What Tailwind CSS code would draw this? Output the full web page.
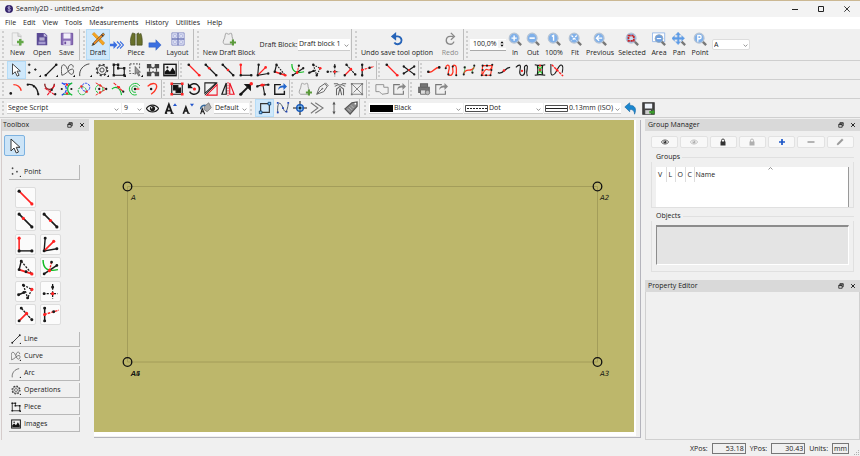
<!DOCTYPE html>
<html lang="en">
<head>
<meta charset="utf-8">
<title>Seamly2D</title>
<script src="https://cdn.jsdelivr.net/npm/@tailwindcss/browser@4"></script>
</head>
<body class="bg-[#f0f0f0] font-['Open_Sans','Noto_Sans',sans-serif] text-[7px] leading-[10px] text-[#1a1a1a]">

<svg class="hidden" aria-hidden="true">
  <defs>
    <g id="corner"><path d="M13.500 16l2.500-2.500V16z" fill="#111" stroke="none"/></g>
  </defs>
  <symbol id="cursor" viewBox="0 0 16 16"><path d="M4 1v12l3-3 2.300 5 2.200-1-2.300-4.700H13z" fill="#fff" stroke="#333" stroke-width="1"/></symbol>
  <symbol id="points" viewBox="0 0 16 16"><path d="M1 2h3M2.500 .5v3M1 11h3M2.500 9.500v3M8 7.500h3M9.500 6v3" stroke-width="1"/><use href="#corner"/></symbol>
  <symbol id="line" viewBox="0 0 16 16"><path d="M2 14L14 2"/><path d="M2 14h0M14 2h0" stroke-width="3" stroke-linecap="round"/><use href="#corner"/></symbol>
  <symbol id="curve" viewBox="0 0 16 16"><path d="M1 14C0 8 0 2 3 2c4 0 5 11 9 11 3 0 3-6 1-6-4 0-7 6-12 7M8 7c0-6 6-7 6-2" stroke="#444" stroke-width="1"/><use href="#corner"/></symbol>
  <symbol id="arc" viewBox="0 0 16 16"><path d="M2 15C1 8 6 2 13 1" stroke="#444" stroke-width="1.100"/><use href="#corner"/></symbol>
  <symbol id="gear" viewBox="0 0 16 16"><circle cx="8" cy="8" r="6.300" stroke="#333" stroke-width="1.800" stroke-dasharray="2.400 2.550"/><circle cx="8" cy="8" r="5.200" stroke="#333" stroke-width=".9"/><circle cx="8" cy="8" r="2.400" stroke="#333" stroke-width="1"/><use href="#corner"/></symbol>
  <symbol id="piece" viewBox="0 0 16 16"><path d="M2 2h5v4h7v8H2z"/><path d="M.7 2h2.600M5.700 2h2.600M5.700 6h2.600M12.700 6h2.600M.7 14h2.600M12.700 14h2.600" stroke-width="2.600"/><use href="#corner"/></symbol>
  <symbol id="piecesel" viewBox="0 0 16 16"><path d="M1 1h11v5M1 1v11h5" stroke="#666" stroke-dasharray="2 1.500"/><path d="M7 4v9l2-2 2 4 1.500-1-2-3.500H13z" fill="#999" stroke="#555" stroke-width=".8"/><use href="#corner"/></symbol>
  <symbol id="union" viewBox="0 0 16 16"><path d="M2 2h3v3H2zM11 2h3v3h-3zM2 11h3v3H2zM11 11h3v3h-3z" fill="#555" stroke="#444" stroke-width="2"/><path d="M5 4l3 2 3-2M5 12l3-2 3 2M4 6v4M12 6v4" stroke="#555"/></symbol>
  <symbol id="image" viewBox="0 0 16 16"><rect x="1" y="1.500" width="14" height="13" stroke-width="1.600"/><path d="M2 13V10l3-3 3 3 3-5 3 5v3z" fill="#111" stroke="none"/><circle cx="5" cy="5" r="1.200" fill="#111" stroke="none"/></symbol>

  <symbol id="p1" viewBox="0 0 16 16"><path d="M2 2l12 12" stroke="#f22" stroke-width="1.500"/><path d="M2 2h0" stroke-width="3" stroke-linecap="round"/><path d="M14 14h0" stroke="#f22" stroke-width="3" stroke-linecap="round"/></symbol>
  <symbol id="p2" viewBox="0 0 16 16"><path d="M2 2l12 12" stroke-width="1.500"/><path d="M2 2h0M14 14h0" stroke-width="3" stroke-linecap="round"/><path d="M6 6h0" stroke="#f22" stroke-width="3" stroke-linecap="round"/></symbol>
  <symbol id="p3" viewBox="0 0 16 16"><path d="M2 2l12 12" stroke-width="1.500"/><path d="M2 2h0M14 14h0" stroke-width="3" stroke-linecap="round"/><path d="M8 8h0" stroke="#f22" stroke-width="3" stroke-linecap="round"/></symbol>
  <symbol id="p4" viewBox="0 0 16 16"><path d="M2 14V2" stroke="#f22" stroke-width="1.500"/><path d="M2 14h12" stroke-width="1.300"/><path d="M2 14h0M14 14h0" stroke-width="3" stroke-linecap="round"/><path d="M2 2h0" stroke="#f22" stroke-width="3" stroke-linecap="round"/></symbol>
  <symbol id="p5" viewBox="0 0 16 16"><path d="M3 2L2 14l12-2" stroke-width="1.300"/><path d="M2 14l9-9" stroke="#f22" stroke-width="1.500"/><path d="M3 2h0M2 14h0M14 12h0" stroke-width="2.800" stroke-linecap="round"/><path d="M11 5h0" stroke="#f22" stroke-width="3" stroke-linecap="round"/></symbol>
  <symbol id="p6" viewBox="0 0 16 16"><path d="M4 2L2 10" stroke-width="1.300"/><path d="M4 2l10 12" stroke-width="1.200" stroke-dasharray="2 1.200"/><path d="M2 10l12 4" stroke="#f22" stroke-width="1.600"/><path d="M4 2h0M2 10h0M8.500 12h0" stroke-width="2.800" stroke-linecap="round"/><path d="M14 14h0" stroke="#f22" stroke-width="3" stroke-linecap="round"/></symbol>
  <symbol id="p7" viewBox="0 0 16 16"><path d="M1 1c0 9 5 11 14 9" stroke="#1b2" stroke-width="1.400"/><path d="M2 14l12-8" stroke-width="1.400"/><path d="M9 3L7 11" stroke="#f22" stroke-dasharray="2 1"/><path d="M2 14h0M14 6h0M9 3h0" stroke-width="2.600" stroke-linecap="round"/><path d="M7 11h0" stroke="#f22" stroke-width="3" stroke-linecap="round"/></symbol>
  <symbol id="p8" viewBox="0 0 16 16"><path d="M6 2l8 4-4 8M6 2l4 12" stroke-width="1.200" stroke-dasharray="1.800 1.200"/><path d="M1.500 11l5-2" stroke-width="1.400"/><path d="M6 2h0M1.500 11h0M10 14h0M6.500 9h0" stroke-width="2.800" stroke-linecap="round"/><path d="M14 6h0" stroke="#f22" stroke-width="3" stroke-linecap="round"/></symbol>
  <symbol id="p9" viewBox="0 0 16 16"><path d="M10 1v14M1 10h14" stroke-width="1.200" stroke-dasharray="2 1.400"/><path d="M10 4h0M2 10h0" stroke-width="2.800" stroke-linecap="round"/><path d="M10 10h0" stroke="#f22" stroke-width="3" stroke-linecap="round"/></symbol>
  <symbol id="p10" viewBox="0 0 16 16"><path d="M4 2l10 11" stroke-width="1.200" stroke-dasharray="2.500 .8"/><path d="M2 14l7-7" stroke="#f22" stroke-width="1.600"/><path d="M4 2h0M14 13h0M2 14h0" stroke-width="2.800" stroke-linecap="round"/><path d="M9 7h0" stroke="#f22" stroke-width="3" stroke-linecap="round"/></symbol>
  <symbol id="p11" viewBox="0 0 16 16"><path d="M2.500 1v14" stroke-width="1.400"/><path d="M2 8l14-4" stroke="#f22" stroke-width="1.300" stroke-dasharray="2.500 1"/><path d="M2.500 2h0M2.500 14h0M11 5.500h0" stroke-width="2.800" stroke-linecap="round"/><path d="M2.500 8h0" stroke="#f22" stroke-width="3" stroke-linecap="round"/></symbol>
  <symbol id="cross" viewBox="0 0 16 16"><path d="M2 12L14 4M2 4l12 9" stroke-width="1.400"/><path d="M2 12h0M14 4h0M2 4h0M14 13h0" stroke-width="2.600" stroke-linecap="round"/><path d="M8 8h0" stroke="#f22" stroke-width="2.200" stroke-linecap="round"/></symbol>
  <symbol id="c1" viewBox="0 0 16 16"><path d="M1 10c6 3 7-6 14-5" stroke="#f32" stroke-width="1.600"/><path d="M1.500 10h0M14 5h0" stroke-width="3" stroke-linecap="round"/></symbol>
  <symbol id="c2" viewBox="0 0 16 16"><path d="M2 6c0-4 4-5 4-1 0 4-3 8 0 9s5-3 4-7 1-5 3-4 1 6 1 11" stroke="#f32" stroke-width="1.500"/><path d="M2 6h0M5 13h0M10 4h0M14 14h0" stroke-width="2.400" stroke-linecap="round"/></symbol>
  <symbol id="c3" viewBox="0 0 16 16"><path d="M2 12c3-8 8 0 12-7" stroke="#f32" stroke-width="1.500"/><path d="M2 12L4 4M14 4l-3 7" stroke="#3a3" stroke-width=".8"/><path d="M2 13h0M3 5h0M14 3h0M12 11h0" stroke-width="2.400" stroke-linecap="round"/></symbol>
  <symbol id="c4" viewBox="0 0 16 16"><path d="M3 3h11L12 14H2zM3 13C8 0 10 15 14 3" stroke="#f32" stroke-width="1.300"/><path d="M3 3h0M14 2h0M12 14h0M2 14h0M8 3h0M7 14h0M3 8h0M13 8h0" stroke-width="2.400" stroke-linecap="round"/></symbol>
  <symbol id="c5" viewBox="0 0 16 16"><path d="M1 11c6 3 8-6 14-6" stroke-width="1.400"/><path d="M8 8.500h0" stroke="#f22" stroke-width="3" stroke-linecap="round"/></symbol>
  <symbol id="c6" viewBox="0 0 16 16"><path d="M1 5c3-3 6-4 5 1s-1 9 3 8 1-8 2-10 4-2 3 2-1 6 0 9" stroke-width="1.300"/><path d="M8 9h0" stroke="#f22" stroke-width="2.600" stroke-linecap="round"/></symbol>
  <symbol id="c7" viewBox="0 0 16 16"><path d="M2 2c4 1 8 1 12 0M2 14c4-1 8-1 12 0M5 3c1 5 1 6 0 10M11 3c-1 5-1 6 0 10" stroke-width="1.300"/><path d="M6 4l4 8M10 4l-4 8" stroke="#2b2" stroke-width="1.400"/><path d="M8 3h0M8 8h0" stroke="#f22" stroke-width="2.400" stroke-linecap="round"/></symbol>
  <symbol id="c8" viewBox="0 0 16 16"><path d="M1 1v9c0 6 4 4 6 0s5-10 7-7 0 5 0 8" stroke-width="1.200"/><path d="M2 2l13 13" stroke="#f22" stroke-width="1.600" stroke-dasharray="3 1"/><path d="M8 8h0" stroke="#f22" stroke-width="3" stroke-linecap="round"/></symbol>

  <symbol id="a1" viewBox="0 0 16 16"><path d="M5 3c5 0 8 3 9 7" stroke="#f32" stroke-width="1.600"/><path d="M2 13h0" stroke-width="3" stroke-linecap="round"/></symbol>
  <symbol id="a2" viewBox="0 0 16 16"><path d="M2 3c6-1 11 3 12 11" stroke-width="1.400"/><path d="M2 3h0M9 5h0M14 14h0" stroke-width="2.600" stroke-linecap="round"/></symbol>
  <symbol id="a3" viewBox="0 0 16 16"><path d="M2 2c0 8 10 9 11 0" stroke="#822" stroke-width="1.600"/><path d="M2 7l12 8M5 15L14 3" stroke="#e12" stroke-width="1.200" stroke-dasharray="4 1"/><path d="M10 9h0M14 14h0" stroke-width="2.600" stroke-linecap="round"/></symbol>
  <symbol id="a4" viewBox="0 0 16 16"><path d="M2 1c7 3 7 11 0 14M4 2h9" stroke="#24e" stroke-width="1.400" stroke-dasharray="4 1"/><path d="M14 1c-7 3-7 11 0 14M4 14h9" stroke="#1b3" stroke-width="1.400"/><path d="M2 8h0M13 8h0" stroke-width="2.500" stroke-linecap="round"/><path d="M8 3h0M8 13h0" stroke="#f22" stroke-width="2.800" stroke-linecap="round"/></symbol>
  <symbol id="a5" viewBox="0 0 16 16"><circle cx="10" cy="6" r="4.600" stroke="#24e" stroke-width="1.100" stroke-dasharray="3 1"/><circle cx="6" cy="10" r="4.600" stroke="#1b3" stroke-width="1.100" stroke-dasharray="3 1"/><path d="M5 5h0M11 11h0" stroke="#f22" stroke-width="2.800" stroke-linecap="round"/></symbol>
  <symbol id="a6" viewBox="0 0 16 16"><circle cx="6" cy="8" r="4.300" stroke="#1b3" stroke-width="1.100" stroke-dasharray="3 1"/><path d="M2 1l12 7-12 7" stroke="#e22" stroke-width="1.100" stroke-dasharray="4 1"/><path d="M6 8h0M14 8h0" stroke-width="2.600" stroke-linecap="round"/><path d="M7 4h0M7 12h0" stroke="#f22" stroke-width="2.600" stroke-linecap="round"/></symbol>
  <symbol id="a7" viewBox="0 0 16 16"><path d="M1 8c5-4 10-1 11 7" stroke="#1b3" stroke-width="1.300"/><path d="M3 1l11 10" stroke="#e22" stroke-width="1.200" stroke-dasharray="4 1"/><path d="M9 6h0" stroke="#f22" stroke-width="2.800" stroke-linecap="round"/><path d="M14 11h0" stroke-width="2.600" stroke-linecap="round"/></symbol>
  <symbol id="a8" viewBox="0 0 16 16"><path d="M13.500 4.500a6.500 6.500 0 1 0-3.500 10M11.500 6.500a3.800 3.800 0 1 0-2.500 5.300" stroke="#1b3" stroke-width="1.100"/><path d="M8 8h5" stroke="#f22"/><path d="M8 8h0" stroke-width="2.800" stroke-linecap="round"/></symbol>
  <symbol id="a9" viewBox="0 0 16 16"><path d="M3 5c5-5 12-4 10 2-1 3-3 5-6 7" stroke="#f32" stroke-width="1.600"/><path d="M7 8h0" stroke-width="2.800" stroke-linecap="round"/></symbol>

  <symbol id="group" viewBox="0 0 16 16"><path d="M2 2h12v12H2z"/><path d="M4 4h5v5H4zM7 7h5v5H7z" fill="#111"/><path d="M.5 2h3M12.500 2h3M.5 14h3M12.500 14h3" stroke="#f22" stroke-width="3"/></symbol>
  <symbol id="rotate" viewBox="0 0 16 16"><path d="M3 5a6 6 0 1 1 0 6" stroke-width="1.700"/><path d="M1 1v6h6z" fill="#111" stroke="none"/><circle cx="8.500" cy="8" r="1.800" fill="#f22" stroke="none"/></symbol>
  <symbol id="mirror" viewBox="0 0 16 16"><path d="M1 13V1h13z" stroke-width="1.200"/><path d="M15 3v12H3z" stroke="#e12" stroke-width="1.200"/><path d="M1 15L15 1" stroke-width="1"/></symbol>
  <symbol id="flip" viewBox="0 0 16 16"><path d="M6 1v13H1z" stroke-width="1.400"/><path d="M10 1v13h5z" stroke="#e12"/><path d="M8 0v16" stroke="#e12" stroke-width="1" stroke-dasharray="2 1"/></symbol>
  <symbol id="move" viewBox="0 0 16 16"><path d="M2 14l9-9" stroke-width="2.200"/><path d="M7 3h6v6z" fill="#111"/><circle cx="14" cy="2" r="2" fill="#f22" stroke="none"/><circle cx="2" cy="14" r="1.800" fill="#111" stroke="none"/></symbol>
  <symbol id="truedarts" viewBox="0 0 16 16"><path d="M1 5c5-2 9-2 14-2M8 4l2 11"/><path d="M5 4l5-1" stroke="#f22" stroke-width="2"/><path d="M1.500 5h0M14 3h0M10 14h0" stroke-width="2.800" stroke-linecap="round"/><path d="M7 3.500h0" stroke="#f22" stroke-width="3.500" stroke-linecap="round"/></symbol>
  <symbol id="export" viewBox="0 0 16 16"><path d="M9 3H2v11h11v-4" stroke-width="1.600"/><path d="M6 9c0-4 3-5 6-5V1l4 4-4 4V6.500C9 6 8 7 6 9z" fill="#26c" stroke="none"/></symbol>
  <symbol id="exportg" viewBox="0 0 16 16"><path d="M9 3H2v11h11v-4" stroke="#777" stroke-width="1.300"/><path d="M6 9c0-4 3-5 6-5V1l4 4-4 4V6.500C9 6 8 7 6 9z" fill="#888" stroke="none"/></symbol>
  <symbol id="newpiece" viewBox="0 0 16 16"><path d="M5 1c1 2 4 2 5 0 2 1 1 4 2 6s1 6 0 7H3c-2-1-2-3-1-5 2-3 1-7 3-8z" fill="#eee" stroke="#999" stroke-width="1"/><path d="M9 12h7M12.500 8.500v7" stroke="#5a9a3a" stroke-width="2.400"/></symbol>
  <symbol id="pen" viewBox="0 0 16 16"><path d="M2 14L5 6l6-4 3 3-4 6zM2 14l6-6M11 2l1-1 3 3-1 1" stroke="#666" stroke-width="1.100"/><circle cx="8.500" cy="7.500" r="1" fill="#777" stroke="none"/></symbol>
  <symbol id="internal" viewBox="0 0 16 16"><path d="M1 2h4c1 2 5 2 6 0h4M2 5l4-2M14 5l-4-2M4 15V8l4-3 4 3v7M6 15l2-8 2 8" stroke="#666" stroke-width="1.200"/></symbol>
  <symbol id="insert" viewBox="0 0 16 16"><path d="M2 2h12v12H2zM2 2l12 12M14 2L4 12" stroke="#777" stroke-width="1"/><path d="M1 2h2M13 2h2M1 14h2M13 14h2" stroke="#777" stroke-width="2"/></symbol>
  <symbol id="workpiece" viewBox="0 0 16 16"><path d="M1 3h9v3h5v7l-7 1-3-3H1z" stroke="#888" stroke-width="1"/></symbol>
  <symbol id="print" viewBox="0 0 16 16"><path d="M4 6V2h8v4M2 6h12v6H2z" fill="#777" stroke="#666"/><path d="M4 9h6v5H4z" fill="#ddd" stroke="#666" stroke-width="1"/><circle cx="12" cy="12" r="2.500" fill="#bbb" stroke="#777" stroke-width="1"/></symbol>

  <symbol id="eye" viewBox="0 0 16 16"><path d="M.5 8c3.500-5.500 11.500-5.500 15 0-3.500 5.500-11.500 5.500-15 0z" stroke="currentColor" stroke-width="1.400"/><circle cx="8" cy="8" r="3.200" fill="currentColor" stroke="none"/><circle cx="7" cy="7" r=".9" fill="#fff" stroke="none"/></symbol>
  <symbol id="bigA" viewBox="0 0 16 16"><path d="M2 14L6 3l4 11M3.500 10.500h5" stroke-width="2.200"/><path d="M1 14h3M8 14h4" stroke-width="1.200"/><path d="M11 5l2.500-3.500L16 5z" fill="#25c" stroke="none"/></symbol>
  <symbol id="smallA" viewBox="0 0 16 16"><path d="M3 14l3-8 3 8M4 11h4" stroke-width="1.800"/><path d="M2 14h2M8 14h3" stroke-width="1"/><path d="M11 2l2.500 3.500L16 2z" fill="#25c" stroke="none"/></symbol>
  <symbol id="fill" viewBox="0 0 16 16"><path d="M2 15l2-7 3 7M3 12h3" stroke-width="1.300"/><path d="M7 5l5-4 3 6-5 5-4-3z" fill="#aaa" stroke="#777" stroke-width="1"/><path d="M2 9c0-4 3-5 6-5" stroke="#369" stroke-width="1.800"/></symbol>
  <symbol id="rectnodes" viewBox="0 0 16 16"><path d="M3 3h10v10H3z" stroke="#333"/><path d="M11.500 1.500h3v3h-3zM1.500 11.500h3v3h-3z" fill="#8cf" stroke="#147" stroke-width="1"/></symbol>
  <symbol id="curvenodes" viewBox="0 0 16 16"><path d="M2 14C1 0 5 0 8 8s5 3 6-5" stroke="#456" stroke-width="1.100"/><path d="M2 13h0M2 2h0M8 8h0M14 2h0M12 12h0" stroke="#24b" stroke-width="2" stroke-linecap="square"/></symbol>
  <symbol id="target" viewBox="0 0 16 16"><path d="M8 0v16M0 8h16" stroke-width="1.200"/><circle cx="8" cy="8" r="3.800" fill="#39e" fill-opacity=".5" stroke="#15b" stroke-width="1.500"/><circle cx="8" cy="8" r="1.200" fill="#111" stroke="none"/></symbol>
  <symbol id="chevs" viewBox="0 0 16 16"><path d="M1 2l8 6-8 6M6 2l9 6-9 6" stroke="#777" stroke-width="1.200"/></symbol>
  <symbol id="updown" viewBox="0 0 16 16"><path d="M8 2v12" stroke="#555" stroke-width="1"/><path d="M6.200 4L8 .5 9.800 4zM6.200 12L8 15.500 9.800 12z" fill="#555" stroke="none"/></symbol>
  <symbol id="tag" viewBox="0 0 16 16"><path d="M1 9l8-7 6-1v5l-8 9z" fill="#888" stroke="#555"/><path d="M4 9l3 3M6 7l3 3M8 5l3 3" stroke="#ccc" stroke-width=".8"/><circle cx="13" cy="3" r="1" fill="#fff" stroke="none"/></symbol>
  <symbol id="undoarrow" viewBox="0 0 16 16"><path d="M1 6l6-5v3c6 0 9 4 6 11 0-4-2-6-6-6v3z" fill="#1b87cf" stroke="#176aa8" stroke-width=".8"/></symbol>
  <symbol id="disk" viewBox="0 0 16 16"><path d="M1 1h14v14H1z" fill="#444" stroke="#333"/><path d="M3.500 2h9v6h-9z" fill="#eef3fa" stroke="none"/><path d="M4 10h7v5H4z" fill="#ccc" stroke="none"/><path d="M9 11h4V8.500l3 4-3 3.500v-2H9z" fill="#3a9a2a" stroke="none"/></symbol>

  <symbol id="new" viewBox="0 0 16 16"><path d="M2.500 1h7l3 3v11h-10z" fill="#f0f0f0" stroke="#c4c4c4" stroke-width=".8"/><path d="M9 1v4h4" stroke="#b8b8b8" stroke-width=".8" fill="#ddd"/><path d="M8 11.500h7.500M11.700 8v7.500" stroke="#63a848" stroke-width="2.800"/></symbol>
  <symbol id="open" viewBox="0 0 16 16"><path d="M2 1h9l3 3v11H2z" fill="#5a4a94" stroke="none"/><path d="M10 1v4h4z" fill="#c9c2e4" stroke="none"/><path d="M5 7h6M5 9h6" stroke="#fff" stroke-width="1"/><path d="M4 11h8v3H4z" fill="#a59bd0" stroke="none"/></symbol>
  <symbol id="save" viewBox="0 0 16 16"><path d="M1.500 1.500h13v13h-13z" fill="#8a6fb8" stroke="#6a4a9c" stroke-width="1"/><path d="M4 1.500h8v6H4z" fill="#f2eefa" stroke="none"/><path d="M4 10h8v5H4z" fill="#dfd8ee" stroke="none"/><path d="M5 11h2v3H5z" fill="#6a4a9c" stroke="none"/></symbol>
  <symbol id="draft" viewBox="0 0 16 16"><path d="M1.500 2.500l2-2 12 12-2 2.500z" fill="#f5a623" stroke="#d98200" stroke-width=".7"/><path d="M14 1L3 12l-2 3.500L4.500 14l11-11z" fill="#f08a24" stroke="#553" stroke-width=".8"/><path d="M12 3l2 2M2 13l1.500 1.500" stroke="#334" stroke-width="1.500"/></symbol>
  <symbol id="arrow2" viewBox="0 0 16 16"><path d="M0 6.500h4V3.500L8.500 8 4 12.500V9.500H0z" fill="#3b6fe0" stroke="none"/><path d="M8 4l4 4-4 4M11.500 4l4 4-4 4" stroke="#3b6fe0" stroke-width="1.300"/></symbol>
  <symbol id="arrow" viewBox="0 0 16 16"><path d="M1 5.500h8V2l6 6-6 6v-3.500H1z" fill="#3b6fe0" stroke="#2a55b8" stroke-width=".5"/></symbol>
  <symbol id="pieces" viewBox="0 0 16 16"><path d="M2 15c-1-6 0-10 2-14l3 1v13zM9 15V2l2-1 1 2 1.500-1.500C15 5 15.500 10 15 15z" fill="#68702a" stroke="#3f451a" stroke-width=".7"/></symbol>
  <symbol id="layout" viewBox="0 0 16 16"><path d="M1 1h14v14H1z" fill="#eef0fb" stroke="#8088c4" stroke-width="1"/><path d="M1 8h14M8 1v14" stroke="#6f78b8" stroke-width="1.500"/><path d="M3 3h3v3H3zM10 3h3v3h-3zM3 10h3v3H3zM10 10h3v3h-3z" stroke="#9aa1d6" stroke-width=".8"/></symbol>
  <symbol id="undo" viewBox="0 0 16 16"><path d="M3 5h6a4.500 4.500 0 1 1-4 7" stroke="#2563b8" stroke-width="2.200"/><path d="M7 0v10L1 5z" fill="#2563b8" stroke="none"/></symbol>
  <symbol id="redo" viewBox="0 0 16 16"><path d="M12 5H8a4.500 4.500 0 1 0 4.500 6" stroke="#888" stroke-width="1.600"/><path d="M9 1l4 4-4 4" stroke="#888" stroke-width="1.600"/></symbol>
  <symbol id="lens" viewBox="0 0 16 16"><path d="M11 11l4 4" stroke="#777" stroke-width="2.600"/><circle cx="7" cy="7" r="5.600" fill="#7fb0ea" stroke="#b5c3d4" stroke-width="1.400"/></symbol>
  <symbol id="zin" viewBox="0 0 16 16"><use href="#lens"/><path d="M4 7h6M7 4v6" stroke="#fff" stroke-width="1.600"/></symbol>
  <symbol id="zout" viewBox="0 0 16 16"><use href="#lens"/><path d="M4 7h6" stroke="#fff" stroke-width="1.800"/></symbol>
  <symbol id="z100" viewBox="0 0 16 16"><use href="#lens"/><path d="M5.500 5L7.500 4v6" stroke="#fff" stroke-width="1.600"/></symbol>
  <symbol id="zfit" viewBox="0 0 16 16"><use href="#lens"/><path d="M4 4l6 6M10 4l-6 6" stroke="#fff" stroke-width="1.500" stroke-dasharray="2.500 1.500"/></symbol>
  <symbol id="zprev" viewBox="0 0 16 16"><use href="#lens"/><path d="M10.500 7H5M7 4L4 7l3 3" stroke="#fff" stroke-width="1.600"/></symbol>
  <symbol id="zsel" viewBox="0 0 16 16"><use href="#lens"/><path d="M4 4h6v6H4z" fill="#cde" stroke="#c22" stroke-width="2" stroke-dasharray="2.500 .8"/></symbol>
  <symbol id="zarea" viewBox="0 0 16 16"><path d="M.5 1h14v10H.5z" fill="#fff" stroke="#8fb4e8" stroke-width="1"/><path d="M11 11l4 4" stroke="#777" stroke-width="2.600"/><circle cx="8" cy="7.500" r="4.500" fill="#6c9fe0" stroke="#9ab" stroke-width="1"/><path d="M5.500 7.500h5" stroke="#fff" stroke-width="1.300"/></symbol>
  <symbol id="zpan" viewBox="0 0 16 16"><path d="M11 11l4 4" stroke="#777" stroke-width="2.600"/><path d="M7 0l3 3.500H8.200V6H11V4l3.500 3.200L11 10.500V8.500H8.200V11H10l-3 3.500L4 11h2V8.500H3v2L-.5 7.200 3 4v2h3V3.500H4z" fill="#5b9be8" stroke="#8fb4e0" stroke-width=".6"/></symbol>
  <symbol id="zpoint" viewBox="0 0 16 16"><use href="#lens"/><path d="M5.500 11V4h2a1.800 1.800 0 0 1 0 3.700h-2" stroke="#fff" stroke-width="1.500"/></symbol>
  <symbol id="lock" viewBox="0 0 16 16"><path d="M3 7h10v8H3z" fill="currentColor" stroke="none"/><path d="M5 8V5a3 3 0 0 1 6 0v3" stroke="currentColor" stroke-width="1.800"/></symbol>
  <symbol id="plus" viewBox="0 0 16 16"><path d="M2 8h12M8 2v12" stroke="#1d57c8" stroke-width="3.400"/></symbol>
  <symbol id="minus" viewBox="0 0 16 16"><path d="M1 8h14" stroke="#888" stroke-width="2.400"/></symbol>
  <symbol id="pencil" viewBox="0 0 16 16"><path d="M2 14l1-3.500L12 1.500l2.500 2.500-9 9z" fill="#999" stroke="#888" stroke-width=".6"/></symbol>
  <symbol id="float" viewBox="0 0 16 16"><path d="M5 5V2h9v8h-3M2 6h9v8H2zM2 7h9M5 3h9" stroke-width="2"/></symbol>
  <symbol id="close" viewBox="0 0 16 16"><path d="M3 3l10 10M13 3L3 13" stroke-width="2.500"/></symbol>
  <symbol id="down" viewBox="0 0 16 16"><path d="M2 5l6 6 6-6" stroke="#555" stroke-width="2"/></symbol>
</svg>

<div class="flex min-h-screen flex-col border-t border-[#cbb893]">
  <header>
    <div class="flex h-4 items-center bg-[#f3f3f3] pl-[5px] pr-0">
      <svg class="mr-[3px] size-2" viewBox="0 0 16 16" fill="none"><circle cx="8" cy="8" r="8" fill="#33236b"/><path d="M11 5c-2-2-6-1-5 1s5 1 5 4-5 2-6 0M8 1v14" stroke="#d5cef0" stroke-width="1.300"/></svg>
      <h1 class="flex-1">Seamly2D - untitled.sm2d*</h1>
      <button aria-label="Minimize" class="flex w-[26px] justify-center"><svg class="size-[6px]" viewBox="0 0 6 6"><path d="M0 3.500h6" stroke="#222"/></svg></button>
      <button aria-label="Maximize" class="flex w-[26px] justify-center"><svg class="size-[6px]" viewBox="0 0 6 6" fill="none"><path d="M.5 .5h5v5h-5z" stroke="#222"/></svg></button>
      <button aria-label="Close" class="flex w-[26px] justify-center"><svg class="size-[6px]" viewBox="0 0 6 6"><path d="M.3 .3l5.400 5.400M5.700 .3L.3 5.700" stroke="#222" stroke-width=".9"/></svg></button>
    </div>
    <nav class="flex h-3 items-center gap-[7px] bg-white pl-[5px]">
      <button>File</button><button>Edit</button><button>View</button><button>Tools</button><button>Measurements</button><button>History</button><button>Utilities</button><button>Help</button>
    </nav>

    <div class="flex h-8 items-stretch border-b border-[#cfcfcf] pl-[2px]">
      <div class="flex w-[78px] border-r border-[#bdbdbd]">
        <span class="my-[2px] mr-px w-[2px] border-l-2 border-dotted border-[#cfcfcf]"></span>
        <div class="flex flex-1" data-big="new:New open:Open save:Save"></div>
      </div>
      <div class="flex w-[114px] border-r border-[#bdbdbd] pl-[3px]">
        <span class="my-[2px] mr-px w-[2px] border-l-2 border-dotted border-[#cfcfcf]"></span>
        <button class="flex w-6 flex-col items-center justify-center gap-[2px] border border-[#b5dcf7] bg-[#cfe8fb]"><svg class="size-[14px] shrink-0" fill="none" stroke="#1a1a1a"><use href="#draft"/></svg>Draft</button>
        <svg class="mt-[9px] size-[14px]" fill="none"><use href="#arrow2"/></svg>
        <button class="flex w-6 flex-col items-center justify-center gap-[2px]"><svg class="size-[14px] shrink-0" fill="none"><use href="#pieces"/></svg>Piece</button>
        <svg class="mt-[9px] size-[14px]" fill="none"><use href="#arrow"/></svg>
        <button class="flex flex-1 flex-col items-center justify-center gap-[2px]"><svg class="size-[14px] shrink-0" fill="none"><use href="#layout"/></svg>Layout</button>
      </div>
      <div class="flex w-[158px] items-center border-r border-[#bdbdbd] pl-[3px]">
        <span class="my-[2px] w-[2px] self-stretch border-l-2 border-dotted border-[#cfcfcf]"></span>
        <button class="flex w-[60px] flex-col items-center gap-[2px] whitespace-nowrap"><svg class="size-[14px]" fill="none"><use href="#newpiece"/></svg>New Draft Block</button>
        <label for="block" class="flex-1 whitespace-nowrap text-center">Draft Block:</label>
        <span class="relative mr-px w-[52px]"><select id="block" class="h-3 w-full appearance-none border-b border-[#ccc] bg-white pl-px"><option>Draft block 1</option></select><svg class="pointer-events-none absolute right-px top-[4px] size-[5px]" fill="none"><use href="#down"/></svg></span>
      </div>
      <div class="flex w-[112px] border-r border-[#bdbdbd] pl-[3px]">
        <span class="my-[2px] w-[2px] border-l-2 border-dotted border-[#cfcfcf]"></span>
        <button class="flex w-[80px] flex-col items-center justify-center gap-[2px] whitespace-nowrap"><svg class="size-[14px] shrink-0" fill="none"><use href="#undo"/></svg>Undo save tool option</button>
        <button class="flex flex-1 flex-col items-center justify-center gap-[2px] text-[#8a8a8a]"><svg class="size-[14px] shrink-0" fill="none"><use href="#redo"/></svg>Redo</button>
      </div>
      <div class="flex items-center pl-[2px]">
        <span class="my-[2px] w-[2px] self-stretch border-l-2 border-dotted border-[#cfcfcf]"></span>
        <span class="ml-[2px] flex h-3 w-9 items-center border-b border-[#aaa] bg-white">
          <input aria-label="Zoom" value="100,0%" class="w-7 pl-[3px]">
          <svg class="h-2 w-[6px] flex-1 bg-[#f3f3f3]" viewBox="0 0 8 10"><path d="M2 4l2-2.500L6 4zM2 6l2 2.500L6 6z"/></svg>
        </span>
        <button class="flex w-[18px] flex-col items-center gap-[2px]"><svg class="size-[14px]" fill="none"><use href="#zin"/></svg>In</button>
        <button class="flex w-[18px] flex-col items-center gap-[2px]"><svg class="size-[14px]" fill="none"><use href="#zout"/></svg>Out</button>
        <button class="flex w-6 flex-col items-center gap-[2px]"><svg class="size-[14px]" fill="none"><use href="#z100"/></svg>100%</button>
        <button class="flex w-[18px] flex-col items-center gap-[2px]"><svg class="size-[14px]" fill="none"><use href="#zfit"/></svg>Fit</button>
        <button class="flex w-8 flex-col items-center gap-[2px]"><svg class="size-[14px]" fill="none"><use href="#zprev"/></svg>Previous</button>
        <button class="flex w-8 flex-col items-center gap-[2px]"><svg class="size-[14px]" fill="none"><use href="#zsel"/></svg>Selected</button>
        <button class="flex w-[22px] flex-col items-center gap-[2px]"><svg class="size-[14px]" fill="none"><use href="#zarea"/></svg>Area</button>
        <button class="flex w-[18px] flex-col items-center gap-[2px]"><svg class="size-[14px]" fill="none"><use href="#zpan"/></svg>Pan</button>
        <button class="flex w-6 flex-col items-center gap-[2px]"><svg class="size-[14px]" fill="none"><use href="#zpoint"/></svg>Point</button>
        <span class="relative w-[38px]"><select aria-label="Point name" class="h-[11px] w-full appearance-none rounded-xs border border-[#ddd] bg-white pl-px leading-[9px]"><option>A</option></select><svg class="pointer-events-none absolute right-[2px] top-[4px] size-[5px]" fill="none"><use href="#down"/></svg></span>
      </div>
    </div>

    <div class="flex h-[19px] items-stretch border-b border-[#cfcfcf] pl-[2px]">
      <div class="flex w-[178px]" data-tools="cursor* points line curve arc gear piece piecesel union image"></div>
      <div class="flex w-[198px]" data-tools="p1 p2 p3 p4 p5 p6 p7 p8 p9 p10 p11"></div>
      <div class="flex w-[42px]" data-tools="p1 cross"></div>
      <div class="flex w-[146px]" data-tools="c1 c2 c3 c4 c5 c6 c7 c8" data-last></div>
    </div>
    <div class="flex h-[19px] items-stretch border-b border-[#cfcfcf] pl-[2px]">
      <div class="flex w-[161px]" data-tools="a1 a2 a3 a4 a5 a6 a7 a8 a9"></div>
      <div class="flex w-[128px]" data-tools="group rotate mirror flip move truedarts export"></div>
      <div class="flex w-[77px]" data-tools="newpiece pen internal insert"></div>
      <div class="flex w-[42px]" data-tools="workpiece exportg"></div>
      <div class="flex w-[40px]" data-tools="print exportg" data-last></div>
    </div>
    <div class="flex h-[19px] items-center border-b border-[#cfcfcf] pl-[2px]">
      <span class="my-[2px] mr-[3px] w-[2px] self-stretch border-l-2 border-dotted border-[#cfcfcf]"></span>
      <span class="relative w-[114px]"><select aria-label="Font" class="h-[11px] w-full appearance-none border-b border-[#ccc] bg-white pl-px"><option>Segoe Script</option></select><svg class="pointer-events-none absolute right-[2px] top-[4px] size-[5px]" fill="none"><use href="#down"/></svg></span>
      <span class="relative ml-px w-[22px]"><select aria-label="Font size" class="h-[11px] w-full appearance-none border-b border-[#ccc] bg-white pl-[2px]"><option>9</option></select><svg class="pointer-events-none absolute right-[2px] top-[4px] size-[5px]" fill="none"><use href="#down"/></svg></span>
      <div class="flex w-[70px]" data-plain="eye bigA smallA fill"></div>
      <span class="relative w-[35px]"><select aria-label="Size" class="h-[11px] w-full appearance-none border-b border-[#ccc] bg-white pl-px"><option>Default</option></select><svg class="pointer-events-none absolute right-[2px] top-[4px] size-[5px]" fill="none"><use href="#down"/></svg></span>
      <div class="flex w-[112px] self-stretch pl-px" data-tools="rectnodes* curvenodes target chevs updown tag"></div>
      <span class="my-[2px] ml-[3px] mr-[3px] w-[2px] self-stretch border-l-2 border-dotted border-[#cfcfcf]"></span>
      <span class="relative w-[94px]"><select aria-label="Line color" class="h-[11px] w-full appearance-none border-b border-[#ccc] bg-white pl-[25px]"><option>Black</option></select><span class="pointer-events-none absolute left-px top-[2px] h-[7px] w-[23px] bg-black"></span><svg class="pointer-events-none absolute right-[2px] top-[4px] size-[5px]" fill="none"><use href="#down"/></svg></span>
      <span class="relative ml-px w-[79px]"><select aria-label="Line type" class="h-[11px] w-full appearance-none border-b border-[#ccc] bg-white pl-[25px]"><option>Dot</option></select><svg class="pointer-events-none absolute left-px top-[2px] h-[7px] w-[23px]" viewBox="0 0 23 7" fill="none" stroke="#222"><path d="M.5 .5h22v6H.5z" stroke-width=".8"/><path d="M2 3.500h20" stroke-dasharray="2 1"/></svg><svg class="pointer-events-none absolute right-[2px] top-[4px] size-[5px]" fill="none"><use href="#down"/></svg></span>
      <span class="relative ml-px w-[77px]"><select aria-label="Line weight" class="h-[11px] w-full appearance-none border-b border-[#ccc] bg-white pl-[25px]"><option>0.13mm (ISO)</option></select><svg class="pointer-events-none absolute left-px top-[2px] h-[7px] w-[23px]" viewBox="0 0 23 7" fill="none" stroke="#222"><path d="M.5 .5h22v6H.5z" stroke-width=".8"/><path d="M1 3.500h21"/></svg><svg class="pointer-events-none absolute right-px top-[4px] size-[5px]" fill="none"><use href="#down"/></svg></span>
      <div class="flex w-9" data-plain="undoarrow disk"></div>
    </div>
  </header>

  <main class="flex flex-1 gap-[4px] pl-px pt-px">
    <aside class="flex w-[89px] flex-col border-l border-[#d5cccb]">
      <div class="mr-px flex h-3 items-center gap-[6px] bg-[#d9d9d9] pl-px pr-[4px]" data-dock><h2 class="flex-1">Toolbox</h2></div>
      <button aria-label="Select" class="ml-[2px] mt-[4px] flex size-[21px] items-center justify-center rounded-xs border border-[#7db2e0] bg-[#cce4f7]"><svg class="size-4" fill="none"><use href="#cursor"/></svg></button>
      <div class="mt-[9px] flex flex-col pl-[7px] pr-[10px]" data-acc="points:Point"></div>
      <div class="my-[7px] ml-[13px] grid h-[138px] w-[46px] grid-cols-2 content-between gap-x-[4px]" id="grid"></div>
      <div class="flex flex-col gap-[2px] pl-[7px] pr-[10px]" data-acc="line:Line curve:Curve arc:Arc gear:Operations piece:Piece image:Images"></div>
    </aside>

    <section aria-label="Drawing" class="mb-[2px] mt-px flex flex-1 flex-col border-b border-r border-[#b4b4bc] pb-px pr-[4px]">
      <div class="flex flex-1 border-b-4 border-r-2 border-white">
        <svg class="w-full flex-1 bg-[#bdb76b]" viewBox="0 0 540 311" preserveAspectRatio="xMidYMid meet" fill="none" stroke="#111">
          <path d="M33.500 66h470v175.500h-470z" stroke="#a09a58" stroke-width=".9"/>
          <g stroke-width="1.300"><circle cx="33.500" cy="66" r="4.300"/><circle cx="503.500" cy="66" r="4.300"/><circle cx="503.500" cy="241.500" r="4.300"/><circle cx="33.500" cy="241.500" r="4.300"/></g>
          <g fill="#111" stroke="none" class="font-['DejaVu_Sans',sans-serif] text-[7px] italic"><text x="37" y="79">A</text><text x="506" y="79">A2</text><text x="506" y="255">A3</text><text x="37" y="255">A4</text><text x="37" y="255">A5</text></g>
        </svg>
      </div>
    </section>

    <aside class="flex w-[215px] flex-col">
      <div class="flex h-3 items-center gap-[6px] bg-[#d9d9d9] pl-[3px] pr-[4px]" data-dock><h2 class="flex-1">Group Manager</h2></div>
      <div class="mx-[6px] mt-[5px] grid grid-cols-7 gap-[2px]" id="groupbtns"></div>
      <div class="mx-[6px] mt-[4px]">
        <h3 class="flex items-center gap-[2px] pl-[5px]">Groups<span class="flex-1 border-t border-[#e0e0e0]"></span></h3>
        <div class="border-x border-b border-[#e0e0e0] px-1 pt-[5px]">
          <div class="h-10 border-r border-[#999] bg-white">
            <table class="text-left"><thead><tr class="h-[15px]"><th class="w-[10px] border-r border-[#ddd] pl-[2px] font-normal">V</th><th class="w-[9px] border-r border-[#ddd] pl-[2px] font-normal">L</th><th class="w-[10px] border-r border-[#ddd] pl-[2px] font-normal">O</th><th class="w-[9px] border-r border-[#ddd] pl-[2px] font-normal">C</th><th class="relative w-[152px] pl-px font-normal">Name<svg class="absolute left-[73px] top-0 h-[3px] w-[5px]" viewBox="0 0 5 3" fill="none"><path d="M.5 2.500l2-2 2 2" stroke="#777" stroke-width=".8"/></svg></th></tr></thead></table>
          </div>
        </div>
        <h3 class="mt-[3px] flex items-center gap-[2px] pl-[5px]">Objects<span class="flex-1 border-t border-[#e0e0e0]"></span></h3>
        <div class="border-x border-b border-[#e0e0e0] px-1 pb-[6px] pt-[4px]">
          <div class="h-10 border-b border-r border-l border-t-2 border-b-white border-l-[#8c8c8c] border-r-white border-t-[#8c8c8c] bg-[#e4e4e4]"></div>
        </div>
      </div>
      <div class="mt-2 flex h-3 items-center gap-[6px] bg-[#d9d9d9] pl-[3px] pr-[4px]" data-dock><h2 class="flex-1">Property Editor</h2></div>
      <div class="flex-1 border-x border-b border-[#d0d0d0]"></div>
    </aside>
  </main>

  <footer class="flex h-4 items-center justify-end gap-[4px] pr-[11px] pt-px">
    <label for="xp">XPos:</label><input id="xp" value="53.18" class="h-[11px] w-[34px] border border-[#777] pr-px text-right">
    <label for="yp">YPos:</label><input id="yp" value="30.43" class="h-[11px] w-[34px] border border-[#777] pr-px text-right">
    <label for="un">Units:</label><input id="un" value="mm" class="h-[11px] w-[17px] border border-[#777] text-center">
  </footer>
</div>
<svg class="fixed bottom-0 right-0 size-[7px]" viewBox="0 0 7 7" fill="#b0b0b0"><path d="M5 1h1v1H5zM3 3h1v1H3zM5 3h1v1H5zM1 5h1v1H1zM3 5h1v1H3zM5 5h1v1H5z"/></svg>

<script>
const svg = (id, cls) => `<svg class="${cls}" fill="none" stroke="#1a1a1a" stroke-width="1.3"><use href="#${id}"/></svg>`;
const list = s => s.trim().split(' ');
document.querySelectorAll('[data-tools]').forEach(el => {
  el.innerHTML = '<span class="my-[2px] mr-[3px] w-[2px] border-l-2 border-dotted border-[#cfcfcf]"></span>' +
    list(el.dataset.tools).map(t => {
      const on = t.endsWith('*'), id = t.replace('*', '');
      return `<button aria-label="${id}" class="${on ? 'flex flex-1 items-center justify-center border border-[#b5dcf7] bg-[#cfe8fb]' : 'flex flex-1 items-center justify-center'}">${svg(id, 'size-[14px] shrink-0')}</button>`;
    }).join('') + ('last' in el.dataset ? '' : '<span class="mr-px w-px border-r border-[#bdbdbd]"></span>');
});
document.querySelectorAll('[data-plain]').forEach(el => {
  el.innerHTML = list(el.dataset.plain).map(id => `<button aria-label="${id}" class="flex flex-1 items-center justify-center">${svg(id, 'size-[13px] shrink-0')}</button>`).join('');
});
document.querySelectorAll('[data-big]').forEach(el => {
  el.innerHTML = list(el.dataset.big).map(t => {
    const [id, label] = t.split(':');
    return `<button class="flex flex-1 flex-col items-center justify-center gap-[2px]">${svg(id, 'size-[14px] shrink-0')}${label}</button>`;
  }).join('');
});
document.querySelectorAll('[data-acc]').forEach(el => {
  el.innerHTML = list(el.dataset.acc).map(t => {
    const [id, label] = t.split(':');
    return `<button class="flex h-[15px] items-center gap-[3px] border-b border-r border-[#b8b8b8] pl-[2px]">${svg(id, 'size-[10px]')}${label}</button>`;
  }).join('');
});
document.querySelectorAll('[data-dock]').forEach(el => {
  el.insertAdjacentHTML('beforeend', `<button aria-label="Float">${svg('float', 'size-[6px]')}</button><button aria-label="Close">${svg('close', 'size-[6px]')}</button>`);
});
document.getElementById('grid').innerHTML = ['p1', '', 'p2', 'p3', 'p4', 'p5', 'p6', 'p7', 'p8', 'p9', 'p10', 'p11'].map(id =>
  id ? `<button aria-label="${id}" class="flex size-[21px] items-center justify-center rounded-xs border border-[#ddd] bg-[#fbfbfb]">${svg(id, 'size-[17px]')}</button>` : '<span></span>').join('');
document.getElementById('groupbtns').innerHTML = [['eye', 'text-[#333]'], ['eye', 'text-[#b0b0b0]'], ['lock', 'text-[#333]'], ['lock', 'text-[#b0b0b0]'], ['plus', ''], ['minus', ''], ['pencil', '']].map(([id, c]) =>
  `<button aria-label="${id}" class="flex h-3 items-center justify-center rounded-xs border border-[#e2e2e2] bg-[#f8f8f8] ${c}">${svg(id, 'size-[8px]')}</button>`).join('');
</script>
</body>
</html>
